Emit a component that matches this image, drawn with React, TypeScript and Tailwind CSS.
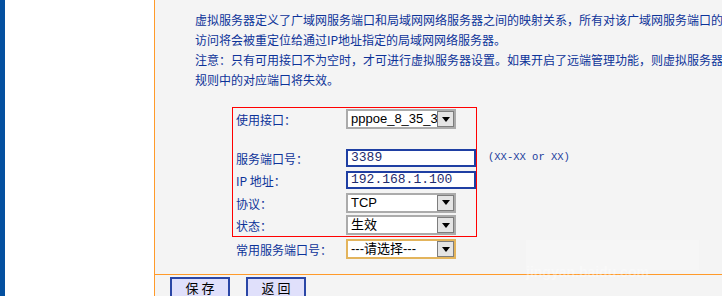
import React from 'react';

const cjk = "font-['Noto_Sans_CJK_SC','Liberation_Sans',sans-serif]";
const sel = "font-['Liberation_Sans','Noto_Sans_CJK_SC',sans-serif]";
const mono = "font-['Liberation_Mono','Courier_New',monospace]";

function Label({ text }: { text: string }) {
  return (
    <div className={`relative top-[1px] w-[110px] shrink-0 text-[12px] leading-[14px] text-[#0d3399] ${cjk}`}>{text}</div>
  );
}

function Select({ value, focused = false }: { value: string; focused?: boolean }) {
  return (
    <div
      className={`flex h-[20px] w-[110px] shrink-0 items-center border-2 bg-white ${
        focused ? 'border-[#e3b45c]' : 'border-[#ababab]'
      }`}
    >
      <div className={`flex-1 overflow-hidden whitespace-nowrap pl-[3px] text-[13px] leading-[16px] text-black ${sel}`}>
        {value}
      </div>
      <div className="flex h-[16px] w-[17px] shrink-0 items-center justify-center border border-[#7d7d7d] bg-[#e4e4e4]">
        <svg width="8" height="5" viewBox="0 0 8 5">
          <path d="M0 0h8L4 5z" fill="#000" />
        </svg>
      </div>
    </div>
  );
}

function Input({ value }: { value: string }) {
  return (
    <div className="flex h-[18px] w-[130px] shrink-0 items-center border-2 border-[#1f3fa3] bg-white pl-[3px]">
      <span className={`text-[13px] leading-[14px] text-[#1e2b6e] ${mono}`}>{value}</span>
    </div>
  );
}

function Row({ h, children }: { h: string; children: React.ReactNode }) {
  return <div className={`flex ${h} items-center whitespace-nowrap`}>{children}</div>;
}

function Btn({ text }: { text: string }) {
  return (
    <div className={`flex h-[22px] w-[60px] items-center justify-center border-2 border-[#2a46a6] bg-[#e0e0fb] text-[13px] text-black ${cjk}`}>
      {text}
    </div>
  );
}

export default function App() {
  return (
    <div className="flex h-[296px] w-[722px] overflow-hidden bg-white">
      <div className="w-[5px] shrink-0 bg-[#0450a0]" />
      <div className="w-[149px] shrink-0 bg-white" />
      <div className="relative flex w-[568px] shrink-0 flex-col bg-[#f4f4f4]">
        <div className="h-[2px] bg-[#6c9aea]" />
        <div className="flex flex-1 flex-col border-l border-[#ff9a2a]">
          <div className={`ml-[40px] mt-[10px] w-[530px] text-[12px] leading-[20px] text-[#0d3399] ${cjk}`}>
            <p>虚拟服务器定义了广域网服务端口和局域网网络服务器之间的映射关系，所有对该广域网服务端口的访问将会被重定位给通过IP地址指定的局域网网络服务器。</p>
            <p>注意：只有可用接口不为空时，才可进行虚拟服务器设置。如果开启了远端管理功能，则虚拟服务器规则中的对应端口将失效。</p>
          </div>

          <div className="ml-[77px] mt-[17px] w-[245px] border border-[#ff0000] pl-[3px]">
            <Row h="h-[22px]">
              <Label text="使用接口：" />
              <Select value="pppoe_8_35_3" />
            </Row>
            <div className="h-[17px]" />
            <Row h="h-[22px]">
              <Label text="服务端口号：" />
              <Input value="3389" />
              <span className={`ml-[12px] text-[10.5px] text-[#1a3c9c] ${mono}`}>(XX-XX or XX)</span>
            </Row>
            <Row h="h-[22px]">
              <Label text="IP 地址：" />
              <Input value="192.168.1.100" />
            </Row>
            <Row h="h-[23px]">
              <Label text="协议：" />
              <Select value="TCP" />
            </Row>
            <Row h="h-[22px]">
              <Label text="状态：" />
              <Select value="生效" />
            </Row>
          </div>
          <div className="ml-[81px]">
            <Row h="h-[24px]">
              <Label text="常用服务端口号：" />
              <Select value="---请选择---" focused />
            </Row>
          </div>

          <div className="mt-[13px] h-px bg-[#ff9a2a]" />
          <div className="mt-[2px] flex gap-[16px] pl-[15px]">
            <Btn text="保 存" />
            <Btn text="返 回" />
          </div>
        </div>
        <div className="pointer-events-none absolute left-[372px] top-[240px] h-[30px] w-[173px] bg-white/20" />
        <div className={`pointer-events-none absolute left-[372px] top-[262px] text-[14px] font-bold text-white/40 ${sel}`}>
          jingyan.baidu.com
        </div>
      </div>
    </div>
  );
}
